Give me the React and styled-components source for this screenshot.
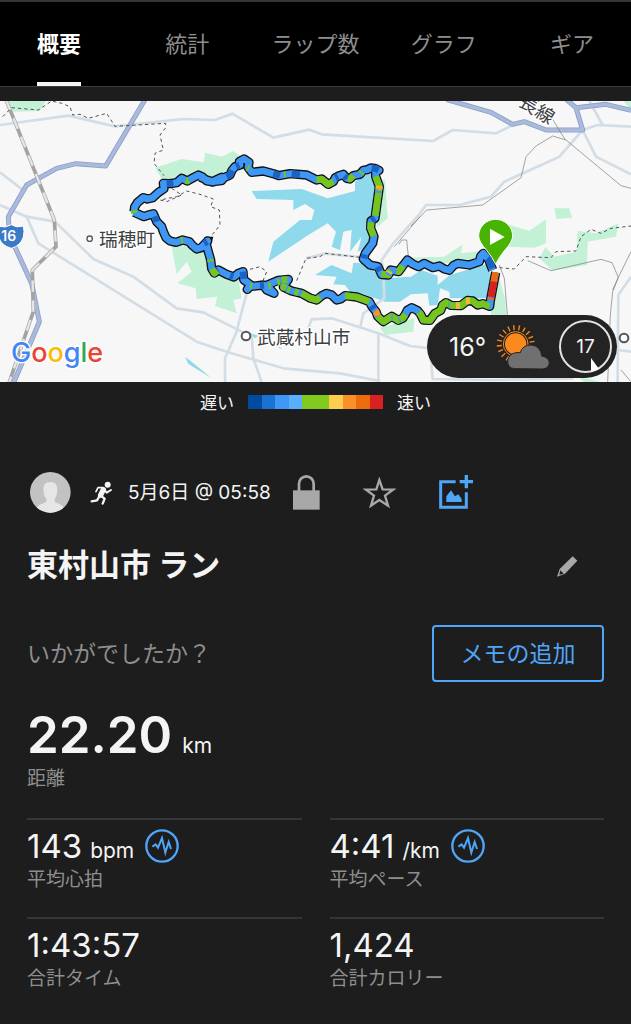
import React from "react";
import styled, { createGlobalStyle } from "styled-components";

const BLUE = "#4fa5f8";

const GlobalStyle = createGlobalStyle`
  * {
    box-sizing: border-box;
  }
  body {
    margin: 0;
    background-color: #1d1d1d;
    color: #f4f4f4;
    font-family: Inter, "Noto Sans CJK JP", sans-serif;
  }
  button {
    padding: 0;
    border: none;
    background: none;
    color: inherit;
    font: inherit;
    cursor: pointer;
  }
  svg {
    display: block;
  }
`;

const Page = styled.div`
  overflow-x: hidden;
`;

const TabBar = styled.nav`
  background-color: #000;
  border-top: 2px solid #363636;
  border-bottom: 1px solid #3c3c3c;
  margin-bottom: 14px;
  overflow: hidden;
`;

const Tabs = styled.div`
  display: grid;
  grid-template-columns: repeat(5, 1fr);
  justify-items: center;
  margin: 0 -5px;
`;

const Tab = styled.button`
  height: 84px;
  font-size: 22px;
  font-weight: ${(props) => (props.$active ? 700 : 400)};
  color: ${(props) => (props.$active ? "#fff" : "#8e8e8e")};
  border-bottom: 4px solid ${(props) => (props.$active ? "#f4f4f4" : "transparent")};
`;

const MapArea = styled.section`
  position: relative;
  background-color: #f7f7f7;

  > svg {
    width: 100%;
    height: auto;
  }
`;

const WeatherPill = styled.div`
  position: absolute;
  right: 14px;
  bottom: 4px;
  height: 63px;
  padding: 0 5px 0 22px;
  display: flex;
  align-items: center;
  border-radius: 32px;
  background-color: #232323;
`;

const Temperature = styled.span`
  width: 47px;
  font-size: 25px;
`;

const Wind = styled.div`
  position: relative;
  width: 53px;
  height: 53px;
  margin-left: 9px;
  display: flex;
  align-items: center;
  justify-content: center;
  border: 2px solid #e2e2e2;
  border-radius: 50%;
  font-size: 19px;
`;

const WindArrow = styled.svg`
  position: absolute;
  left: 28px;
  bottom: -1px;
`;

const Legend = styled.div`
  height: 40px;
  display: flex;
  align-items: center;
  justify-content: center;
  gap: 14px;
  font-size: 17px;
`;

const LegendText = styled.span`
  padding-bottom: 2px;
`;

const LegendBar = styled.div`
  width: 135px;
  height: 14px;
  display: flex;
`;

const LegendStep = styled.span`
  flex: 1;
  background-color: ${(props) => props.color};
`;

const Content = styled.main`
  padding: 50px 27px 20px;
`;

const Meta = styled.div`
  display: flex;
  align-items: center;
  height: 41px;
  padding-left: 3px;
`;

const Runner = styled.svg`
  margin: 0 15px 0 19px;
`;

const DateText = styled.time`
  width: 165px;
  padding-bottom: 4px;
  font-size: 19px;
  white-space: nowrap;
`;

const Actions = styled.div`
  display: flex;
  align-items: center;
  gap: 43px;
`;

const TitleRow = styled.div`
  height: 106px;
  padding-right: 26px;
  display: flex;
  align-items: center;
  justify-content: space-between;
`;

const Title = styled.h1`
  margin: 0;
  padding-bottom: 7px;
  font-size: 31px;
  font-weight: 700;
`;

const NoteRow = styled.div`
  display: flex;
  align-items: center;
  justify-content: space-between;
  margin-top: 6px;
`;

const NoteHint = styled.p`
  margin: 0;
  padding-bottom: 4px;
  font-size: 23px;
  color: #8e8e8e;
`;

const NoteButton = styled.button`
  && {
    width: 172px;
    height: 57px;
    padding-bottom: 4px;
    border: 2px solid ${BLUE};
    border-radius: 4px;
    color: ${BLUE};
    font-size: 23px;
  }
`;

const Label = styled.div`
  font-size: 19px;
  line-height: 28px;
  color: #8e8e8e;
`;

const Distance = styled.div`
  margin-top: 22px;
  display: flex;
  align-items: baseline;
  gap: 10px;
  font-size: 51px;
  line-height: 61px;
  font-weight: 600;
`;

const Unit = styled.span`
  font-size: 21px;
  line-height: 1;
  font-weight: 400;
`;

const Stats = styled.div`
  margin-top: 25px;
  display: grid;
  grid-template-columns: 1fr 1fr;
  column-gap: 28px;
`;

const Stat = styled.div`
  height: 99px;
  border-top: 2px solid #363636;
  padding-top: 6px;
`;

const StatValue = styled.div`
  display: flex;
  align-items: center;
  gap: 11px;
  height: 40px;
  font-size: 33px;
`;

const Figure = styled.span`
  display: flex;
  align-items: baseline;
  gap: 8px;
`;

const tabs = ["概要", "統計", "ラップ数", "グラフ", "ギア"];

const paceColors = [
  "#004b9f",
  "#1a73d0",
  "#3f97f5",
  "#5aaeff",
  "#82c91e",
  "#82c91e",
  "#fccd4e",
  "#fb8f28",
  "#ec6b0c",
  "#d92121",
];

const stats = [
  { value: "143", unit: "bpm", label: "平均心拍", graph: true },
  { value: "4:41", unit: "/km", label: "平均ペース", graph: true },
  { value: "1:43:57", label: "合計タイム" },
  { value: "1,424", label: "合計カロリー" },
];

const parks = [
  "22,48 137,48 120,78 40,80",
  "465,248 545,222 612,232 615,203 665,215 700,198 725,215 725,250 650,290 600,285 490,290",
  "515,485 620,480 640,565 715,580 725,640 700,645 710,685 645,663 652,635 590,642 587,610 532,595 575,560 560,530 530,567",
  "1140,290 1155,283 1163,400 1130,428",
  "1140,728 1243,700 1240,740 1155,750",
  "1523,418 1588,437 1638,403 1638,475 1603,488 1523,485",
  "1663,370 1708,370 1716,398 1670,402",
  "1618,520 1636,487 1663,515 1730,500 1733,437 1788,445 1855,415 1848,455 1763,470 1761,540 1658,557",
  "1220,518 1333,515 1388,478 1383,505 1443,498 1433,535 1220,535",
  "1473,590 1498,580 1515,640 1520,700 1473,700",
  "1870,48 1893,48 1893,75",
  "1738,878 1770,882 1800,891 1753,891",
];

const lakes = [
  "755,318 905,312 983,340 1065,318 1065,290 1125,255 1140,270 1130,400 1115,440 1112,480 1073,500 1085,455 1050,500 1055,435 1030,440 1020,495 995,485 1008,440 983,415 925,450 805,530 820,470 900,405 935,405 943,375 915,357 880,375 880,345 770,342",
  "945,570 995,540 1055,565 1060,533 1090,535 1150,580 1233,575 1263,555 1313,572 1313,600 1350,570 1468,535 1475,640 1350,640 1348,620 1320,610 1313,660 1288,662 1283,625 1233,628 1200,650 1155,650 1090,627 1050,620 1035,600 1000,598 1010,575",
  "555,815 575,830 635,880 565,837",
  "745,743 775,752 765,760",
  "830,780 848,793 838,790",
];

const roads = [
  "0,120 205,92 345,124 550,102 645,105 697,86 820,158 928,134 965,148 1300,168 1358,135 1488,145 1543,118",
  "0,262 75,320",
  "0,360 80,395 165,410 280,522 400,575 530,670 610,682 730,742",
  "80,395 115,475 300,590 590,770 680,800 850,850 1020,865 1140,888",
  "740,625 708,745 675,820 675,891",
  "755,750 760,820 785,891",
  "925,730 935,703 995,700 1135,745 1230,783 1290,790 1298,882 1480,885 1720,880",
  "1135,745 1135,891",
  "1080,730 1090,685 1153,640 1150,570 1145,525 1180,475 1260,385 1278,360 1378,360 1473,335 1513,290 1678,215 1748,135 1793,120 1893,125",
  "1748,135 1788,215 1893,268",
  "1768,48 1808,120",
  "1893,575 1855,630 1853,891",
  "1853,795 1893,800",
  "918,520 975,506 1080,516",
];

const highways = [
  "435,44 317,243 228,236 170,250 80,300 25,395 28,450 95,595 118,710 95,765 38,900",
  "1340,44 1473,82 1538,118 1573,110 1638,135 1748,135 1728,68 1695,40",
  "1728,68 1818,58 1893,76",
];

const tracks = [
  "1233,423 1280,375 1448,360 1563,278 1578,215 1608,183 1658,153 1698,165 1863,302 1893,310",
  "1653,95 1696,165",
  "1583,527 1653,557 1803,523 1836,533 1855,577 1838,620 1831,690 1823,891",
  "1893,500 1855,577 1838,615",
  "1498,540 1513,580 1523,700",
  "1260,395 1183,485",
  "1197,478 1205,465 1220,465 1225,515",
  "1863,855 1893,890",
];

const trails = [
  "8,95 35,68 115,75 155,48 185,55 210,65 218,90 240,88 265,100 320,85 345,124 497,115 497,128 480,150 490,195 465,205 462,235 492,272",
  "515,310 545,330 500,350 480,345 530,335 560,318 600,328 640,342 632,365 658,375 660,420 632,455",
  "750,553 780,545 800,560 790,585",
  "890,587 918,520 960,515 975,505 1080,517",
  "1498,548 1543,552 1578,515 1653,518 1668,500 1728,498 1743,455 1773,433 1803,445 1833,430 1893,423",
];

const route =
  "M402 380 404 366 412 353 430 338 442 342 458 338 476 322 492 311 490 295 510 296 530 293 545 280 562 288 580 278 595 270 608 276 620 288 640 291 665 277 635 291 600 276 " +
  "M600 276 L618 284 638 290 665 287 672 278 690 270 696 256 705 245 720 240 718 230 732 222 747 232 744 247 755 262 790 258 820 266 836 272 870 266 920 270 " +
  "950 285 965 282 985 298 1000 290 1006 278 1016 273 1030 268 1040 280 1050 282 1060 272 1080 268 1090 256 1102 254 1112 249 1125 250 1137 256 1127 262 1127 274 " +
  "1138 305 1125 400 1113 408 1112 430 1122 455 1118 475 1096 505 1090 522 1110 540 1134 545 1145 569 1165 570 1172 555 " +
  "1196 560 1208 543 1222 525 1238 537 1256 545 1273 535 1298 548 1318 543 1333 552 1348 556 1360 542 1373 535 1408 540 1438 530 1442 514 1450 505 1466 524 1478 555 " +
  "M1487 562 L1471 648 1469 664 1448 656 1433 660 1418 648 1403 646 1383 662 1353 661 1338 653 1328 660 1322 676 1305 685 1290 706 1270 705 " +
  "1262 688 1253 677 1235 668 1222 676 1216 688 1208 700 1195 706 1175 694 1150 710 1133 694 1128 680 1116 665 1108 650 1090 643 1070 636 1035 632 1022 642 1010 645 995 630 980 625 " +
  "965 632 950 645 932 640 905 625 875 618 850 606 865 583 835 586 800 601 822 625 800 615 790 600 750 605 742 613 752 600 731 584 " +
  "729 560 715 565 702 576 680 568 655 555 643 564 635 550 632 525 625 500 617 470 " +
  "M617 470 L623 468 604 488 590 492 576 480 568 470 548 465 528 472 510 468 498 458 490 440 485 425 470 410 460 386 446 390 432 395 416 388 402 382";

const routeParts = [
  { color: "#1a63c4", d: "M500 296 520 295 M680 275 690 270 696 256 M708 244 718 240 M820 266 840 272 M875 267 900 269 M1006 278 1014 274 M1034 272 1042 280" },
  { color: "#1a63c4", d: "M1115 249 1125 250 1136 255 M1125 400 1115 407 M1134 545 1140 558 M465 394 470 410 M612 475 622 470 M729 560 731 582 M690 572 700 575" },
  { color: "#1a63c4", d: "M1115 662 1122 672 M1462 520 1466 524 1478 550 M780 602 792 601 M640 562 655 555 M1094 508 1091 520" },
  { color: "#76c51c", d: "M557 286 562 288 566 286 M401 376 404 384 M742 248 747 251 M852 269 857 268 M950 285 965 282 985 298 1000 290 M1044 281 1050 282 1060 272" },
  { color: "#76c51c", d: "M1082 266 1086 261 M1127 274 1138 305 1126 392 M1113 412 1112 430 1121 453 M1144 567 1165 570 1172 556 M1190 559 1196 560 1208 543" },
  { color: "#76c51c", d: "M631 523 632 530 M636 552 643 564 652 557 M543 466 549 465 M750 603 756 604 M805 603 812 602 M845 585 862 583 M832 592 840 590" },
  { color: "#76c51c", d: "M842 606 850 606 858 610 M862 613 870 616 M884 620 895 623 M905 625 932 640 950 645 960 636 M1035 632 1070 636 1090 643 1108 650" },
  { color: "#76c51c", d: "M1133 694 1150 710 1175 694 1195 706 1208 700 1216 688 M1256 682 1262 688 1270 705 1290 706 1305 685 1322 676 1328 660 1338 653 1353 661 1383 662 1403 646 1418 648 1433 660 1448 656 1469 664" },
  { color: "#3f97f5", d: "M1136 317 1135 324 M1165 571 1168 564 M1177 556 1184 557 M1174 697 1178 697 M1197 706 1201 704 M1345 660 1348 660 M1470 650 1469 654" },
  { color: "#f3b93c", d: "M1138 303 1136 313 M1166 564 1169 559 M1368 662 1380 662 M1398 648 1410 648" },
  { color: "#fb8f28", d: "M1126 678 1128 680 1133 692 M1138 308 1138 311" },
  { color: "#ec6b0c", d: "M1487 562 1481 592 M1473 638 1472 644" },
  { color: "#d92121", d: "M1482 590 1473 636" },
];

const RouteMap = () => (
  <svg viewBox="0 48 1893 843" role="img" aria-label="ルート">
    <g fill="#c3f1d6">
      {parks.map((points) => (
        <polygon key={points} points={points} />
      ))}
    </g>
    <g fill="#8fd9ec">
      {lakes.map((points) => (
        <polygon key={points} points={points} />
      ))}
    </g>
    <g fill="none" strokeLinejoin="round">
      {roads.map((points) => (
        <polyline key={points} points={points} stroke="#d3dde5" strokeWidth="8" />
      ))}
      {highways.map((points) => (
        <polyline key={points} points={points} stroke="#8c9fc9" strokeWidth="15" />
      ))}
      {highways.map((points) => (
        <polyline key={points} points={points} stroke="#a9badb" strokeWidth="10" />
      ))}
      <polyline points="18,44 163,405 168,485 97,555 100,680 25,900" stroke="#a3a3a3" strokeWidth="11" />
      <polyline
        points="18,44 163,405 168,485 97,555 100,680 25,900"
        stroke="#e6e6e6"
        strokeWidth="7"
        strokeDasharray="34 26"
      />
      {tracks.map((points) => (
        <polyline key={points} points={points} stroke="#777" strokeWidth="2" />
      ))}
      {trails.map((points) => (
        <polyline key={points} points={points} stroke="#555" strokeWidth="3" strokeDasharray="10 9" />
      ))}
    </g>

    <g fill="none" strokeLinejoin="round" strokeLinecap="butt">
      <path d={route} stroke="#111" strokeWidth="28" />
      <path d="M617 455 640 455 632 482Z" fill="#111" />
      <path d={route} stroke="#3f97f5" strokeWidth="20" />
      {routeParts.map((part) => (
        <path key={part.d} d={part.d} stroke={part.color} strokeWidth="20" />
      ))}
    </g>

    <g
      fontFamily='"Noto Sans CJK JP", sans-serif'
      fontSize="56"
      fill="#3c4043"
      stroke="#fff"
      strokeWidth="8"
      strokeLinejoin="round"
      paintOrder="stroke"
    >
      <text x="297" y="482">瑞穂町</text>
      <text x="771" y="776">武蔵村山市</text>
      <text x="1553" y="60" transform="rotate(32 1553 60)">長線</text>
    </g>
    <g fill="#fff" stroke="#555">
      <circle cx="269" cy="461" r="8" strokeWidth="4" />
      <circle cx="738" cy="753" r="13" strokeWidth="6" />
      <circle cx="1872" cy="759" r="13" strokeWidth="6" />
    </g>

    <path
      d="M-4 424Q18 430 34 419Q50 430 70 423Q74 440 70 456Q62 482 34 490Q4 482 -4 456Z"
      fill="#3b7ac6"
      stroke="#fff"
      strokeWidth="3"
    />
    <text x="4" y="467" fontSize="42" fontWeight="600" fill="#fff">16</text>

    <text x="33" y="830" fontSize="81" fontWeight="500" stroke="#fff" strokeWidth="8" paintOrder="stroke">
      <tspan fill="#4285f4">G</tspan>
      <tspan fill="#ea4335">o</tspan>
      <tspan fill="#fbbc05">o</tspan>
      <tspan fill="#4285f4">g</tspan>
      <tspan fill="#34a853">l</tspan>
      <tspan fill="#ea4335">e</tspan>
    </text>

    <path
      d="M1487 538Q1478 518 1460 496Q1436 470 1436 453A51 50 0 0 1 1538 453Q1538 470 1514 496Q1496 518 1487 538Z"
      fill="#48b300"
      stroke="#fff"
      strokeWidth="3"
    />
    <path d="M1470 431 1514 456 1470 480Z" fill="#fff" />
  </svg>
);

const WeatherIcon = () => (
  <svg width="54" height="46" viewBox="0 0 162 138">
    <g stroke="#fb8a1e" strokeWidth="4">
      {[120, 138, 156, 174, 192, 210, 228, 246, 264, 282, 300, 318, 336, 352].map((angle) => (
        <line key={angle} x1="42" x2="57" y1="0" y2="0" transform={`translate(59 60) rotate(${angle})`} />
      ))}
    </g>
    <circle cx="59" cy="60" r="37" fill="none" stroke="#fb8a1e" strokeWidth="3" />
    <circle cx="59" cy="60" r="32" fill="#fb8a1e" />
    <path
      d="M55 134Q35 132 35 112Q36 90 60 86Q66 84 72 87Q80 62 106 63Q134 66 137 96Q160 100 160 118Q158 133 140 135Z"
      fill="#707070"
      stroke="#232323"
      strokeWidth="3"
    />
  </svg>
);

const Avatar = () => (
  <svg width="41" height="41" viewBox="0 0 123 123">
    <clipPath id="face">
      <circle cx="61" cy="61" r="61" />
    </clipPath>
    <g clipPath="url(#face)">
      <rect width="123" height="123" fill="#c2c2c2" />
      <path
        d="M61 30C80 30 84 44 81 62C80 72 76 77 74 80V90C84 96 102 95 106 123H16C20 95 38 96 49 90V80C46 77 42 72 41 62C38 44 42 30 61 30Z"
        fill="#e6e6e6"
      />
    </g>
  </svg>
);

const RunnerIcon = () => (
  <Runner width="23" height="24" viewBox="0 0 69 72">
    <circle cx="53" cy="11" r="9" fill="#f4f4f4" />
    <g fill="none" stroke="#f4f4f4" strokeLinecap="round" strokeLinejoin="round">
      <path d="M40 26 32 42" strokeWidth="16" />
      <path d="M40 20 24 20 18 32" strokeWidth="5" />
      <path d="M42 25 50 35 63 27" strokeWidth="6" />
      <path d="M33 45 44 53 38 68" strokeWidth="7" />
      <path d="M28 46 21 58 5 61" strokeWidth="7" />
    </g>
  </Runner>
);

const LockIcon = () => (
  <svg width="27" height="35" viewBox="0 0 81 105">
    <path d="M18 50V26A22 22 0 0 1 62 26V50" fill="none" stroke="#a8a8a8" strokeWidth="8" />
    <rect x="0" y="46" width="80" height="58" fill="#a8a8a8" />
  </svg>
);

const StarIcon = () => (
  <svg width="33" height="31" viewBox="0 0 99 93">
    <path
      d="M49 9 59 37 90 38 66 56 75 86 49 69 24 86 33 56 9 38 40 37Z"
      fill="none"
      stroke="#a8a8a8"
      strokeWidth="7"
    />
  </svg>
);

const AddImageIcon = () => (
  <svg width="34" height="35" viewBox="0 0 102 105">
    <path d="M50 20H5V97H82V52" fill="none" stroke={BLUE} strokeWidth="9" />
    <path d="M82 0V40M62 20H102" stroke={BLUE} strokeWidth="10" />
    <path d="M22 81V64L36 46 48 64 58 58 68 72V81Z" fill={BLUE} />
  </svg>
);

const PencilIcon = () => (
  <svg width="21" height="21" viewBox="0 0 63 63">
    <path d="M47 1 61 14 24 53 0 62 8 39Z" fill="#a8a8a8" />
    <path d="M10 43 20 53 7 56Z" fill="#1d1d1d" />
  </svg>
);

const GraphIcon = () => (
  <svg width="34" height="34" viewBox="0 0 102 102">
    <circle cx="51" cy="51" r="47" fill="none" stroke={BLUE} strokeWidth="7" />
    <path
      d="M22 53 32 46 39 56 51 27 61 71 71 39 78 60"
      fill="none"
      stroke={BLUE}
      strokeWidth="6"
    />
  </svg>
);

export default function App() {
  return (
    <Page lang="ja">
      <GlobalStyle />
      <TabBar>
        <Tabs>
          {tabs.map((tab, index) => (
            <Tab key={tab} $active={index === 0}>
              {tab}
            </Tab>
          ))}
        </Tabs>
      </TabBar>

      <MapArea>
        <RouteMap />
        <WeatherPill>
          <Temperature>16°</Temperature>
          <WeatherIcon />
          <Wind>
            17
            <WindArrow width="10" height="14" viewBox="0 0 10 14">
              <path d="M2 0 10 11 2 14Z" fill="#fff" />
            </WindArrow>
          </Wind>
        </WeatherPill>
      </MapArea>

      <Legend>
        <LegendText>遅い</LegendText>
        <LegendBar>
          {paceColors.map((color, index) => (
            <LegendStep key={index} color={color} />
          ))}
        </LegendBar>
        <LegendText>速い</LegendText>
      </Legend>

      <Content>
        <Meta>
          <Avatar />
          <RunnerIcon />
          <DateText>5月6日 @ 05:58</DateText>
          <Actions>
            <button aria-label="プライバシー">
              <LockIcon />
            </button>
            <button aria-label="お気に入り">
              <StarIcon />
            </button>
            <button aria-label="写真を追加">
              <AddImageIcon />
            </button>
          </Actions>
        </Meta>

        <TitleRow>
          <Title>東村山市 ラン</Title>
          <button aria-label="名前を編集">
            <PencilIcon />
          </button>
        </TitleRow>

        <NoteRow>
          <NoteHint>いかがでしたか？</NoteHint>
          <NoteButton>メモの追加</NoteButton>
        </NoteRow>

        <Distance>
          22.20 <Unit>km</Unit>
        </Distance>
        <Label>距離</Label>

        <Stats>
          {stats.map((stat) => (
            <Stat key={stat.label}>
              <StatValue>
                <Figure>
                  {stat.value}
                  {stat.unit && <Unit>{stat.unit}</Unit>}
                </Figure>
                {stat.graph && (
                  <button aria-label={`${stat.label}のグラフ`}>
                    <GraphIcon />
                  </button>
                )}
              </StatValue>
              <Label>{stat.label}</Label>
            </Stat>
          ))}
        </Stats>
      </Content>
    </Page>
  );
}
